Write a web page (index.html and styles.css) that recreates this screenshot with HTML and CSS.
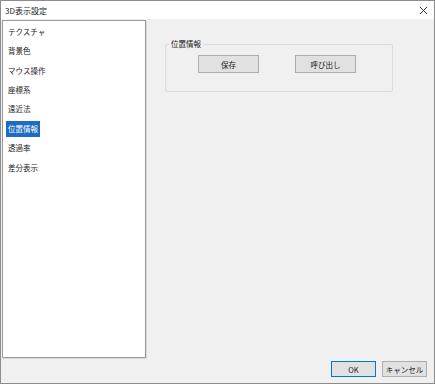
FILE: index.html
```html
<!DOCTYPE html>
<html lang="ja">
<head>
    <meta charset="UTF-8">
    <title>3D表示設定</title>
    <link rel="stylesheet" href="styles.css">
</head>
<body>
    <div class="window">
        <div class="titlebar">
            <span class="title">3D表示設定</span>
            <svg class="close" width="9" height="9" viewBox="0 0 9 9">
                <path d="M1 1 L8 8 M8 1 L1 8" stroke="#333" stroke-width="1" fill="none"/>
            </svg>
        </div>
        <div class="content">
            <ul class="menu">
                <li><span>テクスチャ</span></li>
                <li><span>背景色</span></li>
                <li><span>マウス操作</span></li>
                <li><span>座標系</span></li>
                <li><span>遠近法</span></li>
                <li class="selected"><span>位置情報</span></li>
                <li><span>透過率</span></li>
                <li><span>差分表示</span></li>
            </ul>
            <div class="panel">
                <fieldset class="group">
                    <legend>位置情報</legend>
                    <div class="group-buttons">
                        <button class="btn">保存</button>
                        <button class="btn">呼び出し</button>
                    </div>
                </fieldset>
            </div>
        </div>
        <div class="footer">
            <button class="btn small default">OK</button>
            <button class="btn small">キャンセル</button>
        </div>
    </div>
</body>
</html>
```

FILE: styles.css
```css
body {
    margin: 0;
    font-family: "Noto Sans CJK JP", "Noto Sans", sans-serif;
    font-size: 7.5px;
    color: #1a1a1a;
}
.window {
    width: 435px;
    height: 384px;
    box-sizing: border-box;
    border: 1px solid #8c8c8c;
    background: #f0f0f0;
    display: flex;
    flex-direction: column;
}
.titlebar {
    height: 18px;
    background: #fff;
    display: flex;
    align-items: center;
    justify-content: space-between;
    padding: 0 6px 0 4px;
    flex-shrink: 0;
}
.title {
    font-size: 8px;
}
.close {
    display: block;
}
.content {
    display: flex;
    height: 338px;
    margin-top: 1px;
    flex-shrink: 0;
}
.menu {
    list-style: none;
    margin: 0 0 0 1px;
    padding: 1px 0 0 3px;
    width: 144px;
    box-sizing: border-box;
    background: #fff;
    border: 1px solid #9a9a9a;
    box-shadow: 1px 1px 0 #d8d8d8;
}
.menu li {
    height: 19.45px;
    display: flex;
    align-items: center;
}
.menu li span {
    padding: 3px 2px;
    line-height: 10px;
}
.menu li.selected span {
    background: #1c6cc4;
    color: #fff;
}
.panel {
    flex: 1;
    padding: 19px 0 0 19px;
}
.group {
    width: 228px;
    height: 53px;
    box-sizing: border-box;
    margin: 0;
    padding: 0;
    border: 1px solid #dcdcdc;
    border-radius: 2px;
}
.group legend {
    padding: 0 2px;
    margin-left: 3px;
    line-height: 10px;
}
.group-buttons {
    display: flex;
    gap: 36px;
    padding: 6px 0 0 32px;
}
.btn {
    font-family: inherit;
    font-size: 7.5px;
    color: #1a1a1a;
    width: 61px;
    height: 18px;
    padding: 0;
    background: #e1e1e1;
    border: 1px solid #adadad;
}
.footer {
    display: flex;
    justify-content: flex-end;
    gap: 6px;
    padding: 3px 7px 0 0;
}
.btn.small {
    width: 45px;
    height: 16px;
}
.btn.default {
    border-color: #0078d7;
}
```
